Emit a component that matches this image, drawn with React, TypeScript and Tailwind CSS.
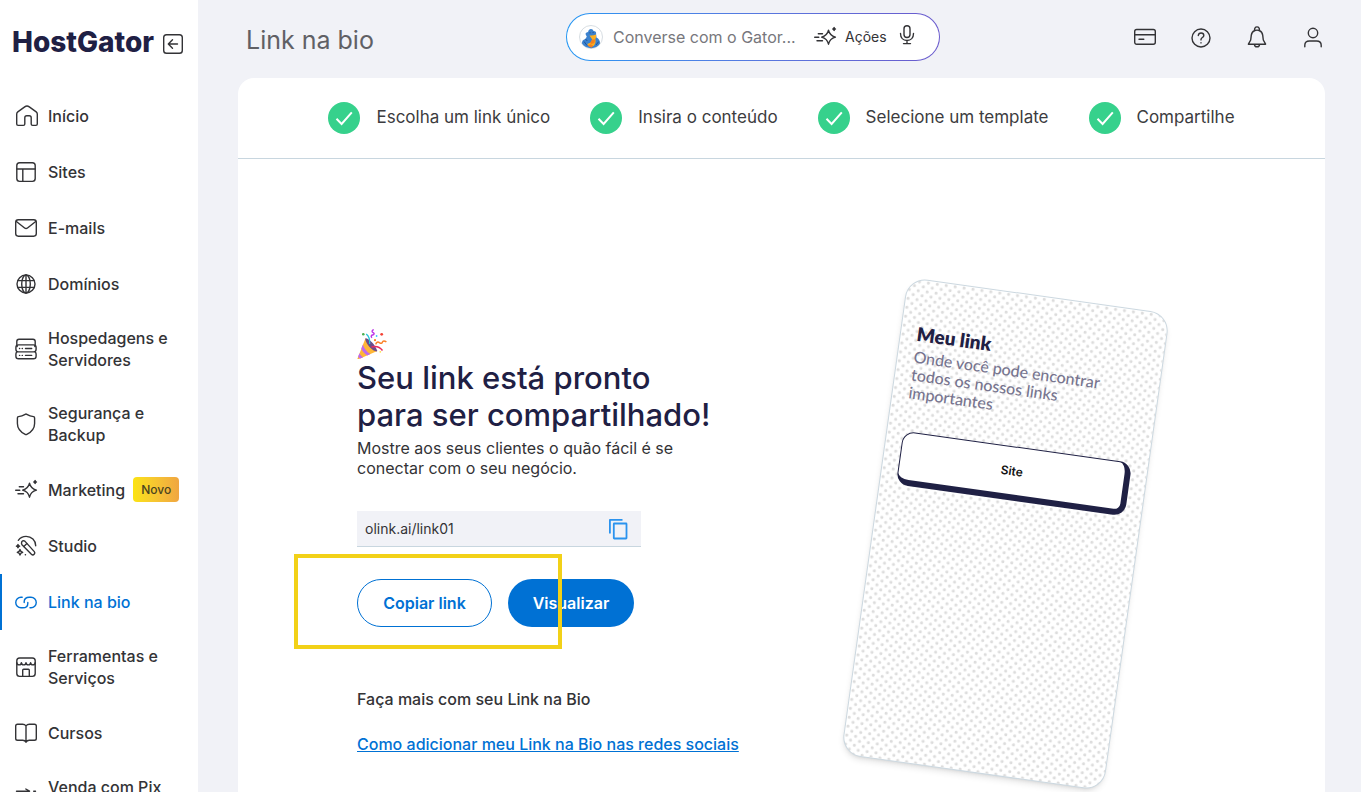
import React from "react";
import { clsx } from "clsx";

type IconProps = { className?: string };

const Svg: React.FC<IconProps & { children: React.ReactNode }> = ({
  className = "size-6",
  children,
}) => (
  <svg
    viewBox="0 0 24 24"
    fill="none"
    stroke="currentColor"
    strokeWidth="1.4"
    strokeLinecap="round"
    strokeLinejoin="round"
    className={clsx("shrink-0", className)}
    aria-hidden="true"
  >
    {children}
  </svg>
);

const HomeIcon = () => (
  <Svg>
    <path d="M2.7 10c0-.9.4-1.6 1.1-2.1l6.9-5c1.4-1 3.2-1 4.6 0l6.9 5c.7.5 1.1 1.200 1.100 2.100v10c0 .9-.6 1.400-1.400 1.400h-3.300c-.8 0-1.400-.5-1.400-1.400v-6.300c0-1.300-.7-2-2-2h-2.400c-1.300 0-2 .7-2 2V20c0 .9-.6 1.400-1.400 1.400H4.100c-.8 0-1.400-.5-1.400-1.400z" />
  </Svg>
);

const LayoutIcon = () => (
  <Svg>
    <rect x="2.8" y="2.8" width="18.4" height="18.6" rx="2.8" />
    <path d="M2.8 9h18.4M8.8 9v12.4" />
  </Svg>
);

const MailIcon = () => (
  <Svg>
    <rect x="1.7" y="3.8" width="20.6" height="16.4" rx="2.6" />
    <path d="m2.4 5.5 8.2 6.5c.9.7 2 .7 2.9 0l8.200-6.500" />
  </Svg>
);

const GlobeIcon = () => (
  <Svg>
    <circle cx="12" cy="12" r="9" />
    <ellipse cx="12" cy="12" rx="4.3" ry="9" />
    <path d="M12 3v18M4 8.6h16M4 15.4h16" />
  </Svg>
);

const ServerIcon = () => (
  <Svg>
    <path d="M3.2 9.5 2.8 7.4V4.5c0-1.3.9-2.2 2.2-2.2h14c1.3 0 2.2.9 2.2 2.2v2.9l-.4 2.1" />
    <rect x="1.9" y="7.9" width="20.2" height="7" rx="2.6" />
    <path d="M3 14.900c-.8.6-1.100 1.300-1.100 2.100v2.200c0 1.500 1.100 2.600 2.600 2.600h15c1.500 0 2.600-1.100 2.600-2.600V17c0-.8-.3-1.500-1.100-2.100" />
    <path d="M11.5 11.5h6.2M11.5 18.4h6.2M5.5 11.5h.2M8.2 11.5h.2M5.5 18.4h.2M8.2 18.4h.2" />
  </Svg>
);

const ShieldIcon = () => (
  <Svg>
    <path d="M11.2 2.3c.5-.3 1.1-.3 1.6 0 2.1 1.2 4.4 2 6.7 2.3.7.1 1.1.6 1.1 1.3v5.5c0 4.7-3.3 8.6-7.8 11-.5.3-1.1.3-1.6 0-4.5-2.4-7.8-6.3-7.8-11V5.9c0-.7.4-1.2 1.1-1.3 2.3-.3 4.6-1.1 6.7-2.3z" />
  </Svg>
);

const SparkIcon: React.FC<IconProps> = ({ className }) => (
  <Svg className={className}>
    <path d="M15.5 5.2c.8 3.7 2.9 5.9 6.9 7-4 1.1-6.1 3.3-6.9 7-.8-3.7-2.9-5.9-6.9-7 4-1.1 6.1-3.3 6.9-7z" />
    <path d="M5.3 8.8h4.2M1.7 12.2h4.1M4 15.7h5.5" />
    <path d="m21.1 2.6.5.9.9.5-.9.5-.5.9-.5-.9-.9-.5.9-.5z" fill="currentColor" />
  </Svg>
);

const WandIcon = () => (
  <Svg>
    <path d="M4.3 6.3C6.2 3.8 9 2.4 12.1 2.4c5.4 0 9.6 4.1 9.6 9.4" />
    <path d="M7.6 8.8a2 2 0 0 1 3.2-1.7l9.5 10.5c1.5 1.8-.9 4.5-2.9 2.7L8 10.7a2 2 0 0 1-.4-1.9z" />
    <path d="M12.9 9.6 9.8 12.4" />
    <path d="m4 10.6.5 1.1 1.1.5-1.1.5-.5 1.1-.5-1.1-1.1-.5 1.1-.5z" fill="currentColor" />
    <path d="m6 15.6.9 1.8 1.8.9-1.8.9L6 21l-.9-1.8-1.8-.9 1.8-.9zM11.3 20.8h.2" />
  </Svg>
);

const ChainIcon = () => (
  <Svg>
    <path d="M8.2 7.2H7A5.2 5.2 0 0 0 7 17.7h1.8c3 0 5-1.700 5-4.300v-1" />
    <path d="M16 17.7h1A5.2 5.2 0 0 0 17 7.200h-1.800c-3 0-5 1.700-5 4.300v1" />
  </Svg>
);

const StoreIcon = () => (
  <Svg>
    <rect x="2.8" y="3" width="18.4" height="18.4" rx="2.8" />
    <path d="M2.8 7.6c.3 3 4.4 3 4.6 0 .3 3 4.4 3 4.6 0 .3 3 4.4 3 4.6 0 .3 3 4.4 3 4.6 0M8.7 21.4v-6.2c0-.6.3-.9.9-.9h4.8c.6 0 .9.3.9.9v6.2" />
  </Svg>
);

const BookIcon = () => (
  <Svg>
    <path d="M12 5c-.8-1.3-2-1.8-3.4-1.8H3.5c-1.1 0-1.8.7-1.8 1.8v12.5c0 1.1.7 1.8 1.8 1.8h5.3c1.5 0 2.6.7 3.2 2 .6-1.3 1.7-2 3.2-2h5.3c1.1 0 1.8-.7 1.8-1.8V5c0-1.1-.7-1.8-1.8-1.8h-5.1C14 3.2 12.8 3.7 12 5zM12 5v16.3" />
  </Svg>
);

const PixIcon = () => (
  <Svg>
    <path d="M2.5 5.2h13M11.8 3l3.7 2.2-3.7 3M21.5 5.2h-1.8M21.5 13h-17M8.5 10l-4 3 4 3" />
  </Svg>
);

const CollapseIcon = () => (
  <Svg>
    <rect x="2.7" y="2.7" width="18.6" height="18.6" rx="2.8" />
    <path d="M16.500 12H7.500M11.500 7.800 7.300 12l4.200 4.200" />
  </Svg>
);

const MicIcon = () => (
  <Svg>
    <rect x="9" y="2.7" width="6" height="11.8" rx="3" />
    <path d="M5.5 10.5c0 4.2 2.6 7 6.5 7s6.5-2.800 6.500-7M12 17.500v3M8.500 20.600h7" />
  </Svg>
);

const CardIcon = () => (
  <Svg>
    <rect x="1.7" y="4.5" width="20.6" height="14.8" rx="2" />
    <path d="M1.7 9.7h20.6M6 14.2h4.8" />
  </Svg>
);

const HelpIcon = () => (
  <Svg>
    <circle cx="12" cy="13" r="9" />
    <path d="M9.3 10.5c.2-1.7 1.2-2.5 2.8-2.5s2.7.9 2.7 2.4c0 2.2-2.8 2-2.8 4.100v.4M12 17.700v.2" />
  </Svg>
);

const BellIcon = () => (
  <Svg>
    <path d="M9.8 5.5c-.8-1.7.4-3.6 2.2-3.6s3 1.9 2.2 3.6c2 .8 3.2 2.5 3.5 4.7l.6 4.8 2.3 4.2H3.4L5.7 15l.6-4.8c.3-2.2 1.5-3.900 3.500-4.700zM9.800 5.500c1.400-.5 3-.5 4.400 0M9.500 19.400c0 3.200 5 3.200 5 0" />
  </Svg>
);

const UserIcon = () => (
  <Svg>
    <circle cx="12" cy="8" r="4.7" />
    <path d="M3.8 21.8v-1.5c0-2.9 1.7-4.3 4.6-4.3h7.200c2.900 0 4.600 1.400 4.600 4.300v1.500" />
  </Svg>
);

const CopyIcon = () => (
  <svg viewBox="0 0 24 24" fill="none" stroke="currentColor" strokeWidth="1.8" strokeLinejoin="round" className="size-6">
    <path d="M2.9 16.5V2.9h12.6" />
    <rect x="6.8" y="6.5" width="12.7" height="15" rx=".5" />
  </svg>
);

const GatorAvatar = () => (
  <svg viewBox="0 0 24 24" className="size-6 shrink-0" aria-hidden="true">
    <circle cx="12" cy="12" r="11.5" fill="#fff" stroke="#c5ced6" strokeWidth=".7" />
    <path d="M3 18.600c-.2-2.400 1-3.800 3.200-4.500l1.600-2.300-1.200-2.500c-.2-1.600 1.200-2 2.500-2.300.2-1.600 1.200-3 2.900-3 1.400 0 2 .9 2.600 2 1.900.1 2.900 1.200 2.500 2.900l.4 3.600c2.400 1.200 3.700 3.500 3.500 6.100-2 3.200-5 4.600-8.800 4.600-3.900 0-7.200-1.700-9.200-4.600z" fill="#3b82cf" />
    <path d="M10.500 10.400c2.300.3 4.500-.1 6.500-.9.3 1.800.2 3.300-.7 4.500.7 2.500.2 5-1.600 6.900l-4.600.5-1.900-2.400 3.700-1.600 1.300-3z" fill="#fdb022" />
    <path d="m13.200 14.400 2.900-.2-.6 3.800-3 1.100-1.600-1zM8.400 20.200l3.300-1 2.700 1.500-2 2.100z" fill="#f58220" />
    <path d="M10.600 7.800h.8M13.7 7.600h.8" stroke="#173f7c" strokeWidth="1" />
    <path d="m5 16.500 3 4M17 20l2.700-3.400M6.500 14l1.800 2" stroke="#1c4f96" strokeWidth=".9" />
  </svg>
);

const PartyIcon = () => (
  <svg viewBox="0 0 30 30" className="size-[30px]" fill="none" aria-hidden="true">
    <path d="M.6 29.300 8.500 9.200 20.300 21.900 2.600 29.800c-1.400.5-2.600.2-2-.5z" fill="#ffb636" />
    <path d="M5.9 15.600c.9 3.500 3.700 7.600 7.500 9.500l-3.100 1.400C7.500 25 5.200 22 4.300 19.600zM2.500 24.200c.8 1.700 2 3.100 3.700 4.100l-3 1.200c-1-.5-1.800-1.300-2.100-2.100z" fill="#bd6af0" />
    <path d="M8.500 9.200c3.700.3 9.600 6 11.800 12.700-.5 1.200-3.900.2-7-3.100-3.400-3.500-5.500-8.100-4.800-9.600z" fill="#6b4c8a" />
    <path d="M9.200 5c3.100 2.300 3.800 5.600 3.400 10" stroke="#26c6da" strokeWidth="1.3" />
    <path d="M16.700.5c-2 .8-2.100 2.500-.5 3.200 1.600.7.900 2-.7 2.300-1.600.3-1.700 1.600-.5 2.800" stroke="#bd35e8" strokeWidth="1.4" />
    <path d="M18.800 15.400c.4-2.400 2.200-2.900 3.600-1.800 1.600 1.200 2.700.8 3-.5.4-1.500 2.300-1.300 4-.2" stroke="#fa8128" strokeWidth="1.5" />
    <path d="M14.500 18c3.800-1.200 8.200-.2 11 3.500" stroke="#e92c5c" strokeWidth="1.5" />
    <circle cx="6.3" cy="5.3" r="1.3" fill="#4caf50" />
    <circle cx="24.7" cy="5.3" r="1.4" fill="#f44336" />
    <circle cx="18" cy="11.2" r="1.1" fill="#fa8128" />
    <circle cx="19.6" cy="7" r=".9" fill="#40c4ff" />
    <circle cx="23.3" cy="22.8" r=".9" fill="#ffe14d" />
  </svg>
);

const CheckBadge = () => (
  <svg viewBox="0 0 32 32" className="size-8 shrink-0" fill="none" aria-hidden="true">
    <circle cx="16" cy="16" r="16" fill="#36d18c" />
    <path d="m8.500 16.800 5.100 5.200L23.800 10.400" stroke="#fff" strokeWidth="2" />
  </svg>
);

const navItems = [
  { label: "Início", icon: HomeIcon },
  { label: "Sites", icon: LayoutIcon },
  { label: "E-mails", icon: MailIcon },
  { label: "Domínios", icon: GlobeIcon },
  { label: "Hospedagens e Servidores", icon: ServerIcon },
  { label: "Segurança e Backup", icon: ShieldIcon },
  { label: "Marketing", icon: SparkIcon, badge: "Novo" },
  { label: "Studio", icon: WandIcon },
  { label: "Link na bio", icon: ChainIcon, active: true },
  { label: "Ferramentas e Serviços", icon: StoreIcon },
  { label: "Cursos", icon: BookIcon },
  { label: "Venda com Pix Parcelado", icon: PixIcon },
];

const steps = [
  "Escolha um link único",
  "Insira o conteúdo",
  "Selecione um template",
  "Compartilhe",
];

const headerActions = [
  { label: "Pagamentos", icon: CardIcon },
  { label: "Ajuda", icon: HelpIcon },
  { label: "Notificações", icon: BellIcon },
  { label: "Minha conta", icon: UserIcon },
];

const Sidebar = () => (
  <aside className="w-[198px] shrink-0 bg-white">
    <div className="flex h-[88px] items-center justify-between pl-3 pr-[13px]">
      <span className="pb-1 text-[28px] leading-8 font-extrabold text-[#1f2044]">HostGator</span>
      <button type="button" aria-label="Recolher menu">
        <CollapseIcon />
      </button>
    </div>
    <nav>
      {navItems.map(({ label, icon: Icon, badge, active }) => (
        <a
          key={label}
          href="#"
          className={clsx(
            "flex min-h-14 items-center border-l-2 pb-4 pl-3 pr-4 pt-[15px] text-base leading-[22px] font-medium",
            active ? "border-[#0071d4] text-[#0071d4]" : "border-transparent"
          )}
        >
          <Icon />
          <span className="ml-[10px]">{label}</span>
          {badge && (
            <span className="ml-2 rounded bg-linear-to-r from-[#fbe30f] to-[#f0a640] px-2 text-xs leading-[25px] text-[#4a4420]">
              {badge}
            </span>
          )}
        </a>
      ))}
    </nav>
  </aside>
);

const Header = () => (
  <header className="flex h-[78px] items-start pl-12 pr-9">
    <h1 className="w-80 shrink-0 pt-6 text-[25px] leading-8 text-[#606065]">
      Link na bio
    </h1>
    <div className="mt-[13px] w-[374px] rounded-full bg-linear-to-r from-[#2196f3] to-[#6a5acd] p-px">
      <form className="flex h-[46px] items-center rounded-full bg-white pl-3 pr-5">
        <GatorAvatar />
        <input
          aria-label="Converse com o Gator"
          placeholder="Converse com o Gator..."
          className="ml-[10px] w-[200px] text-base text-[#333] outline-none placeholder:text-[#77777c]"
        />
        <button type="button" className="flex items-center gap-2 text-sm">
          <SparkIcon />
          Ações
        </button>
        <button type="button" aria-label="Falar" className="ml-2 pb-1">
          <MicIcon />
        </button>
      </form>
    </div>
    <div className="ml-auto flex gap-8 pt-[25px]">
      {headerActions.map(({ label, icon: Icon }) => (
        <button key={label} type="button" aria-label={label}>
          <Icon />
        </button>
      ))}
    </div>
  </header>
);

const Stepper = () => (
  <ol className="flex h-[81px] items-center justify-center gap-10 border-b border-[#c8d6df]">
    {steps.map((step) => (
      <li key={step} className="flex items-center gap-4 text-[17px] text-[#3c3c40]">
        <CheckBadge />
        {step}
      </li>
    ))}
  </ol>
);

const ShareInfo = () => (
  <section className="pt-9">
    <PartyIcon />
    <h2 className="text-[31px] leading-[37px] font-medium text-[#1f2044]">
      Seu link está pronto
      <br />
      para ser compartilhado!
    </h2>
    <p className="mt-[5px] text-base leading-5">
      Mostre aos seus clientes o quão fácil é se
      <br />
      conectar com o seu negócio.
    </p>
    <div className="mt-[33px] flex h-9 w-[284px] items-center border-b border-[#c8d6df] bg-[#f1f2f7] pl-2 pr-[10px]">
      <input
        aria-label="Seu link"
        readOnly
        value="olink.ai/link01"
        className="min-w-0 flex-1 text-sm outline-none"
      />
      <button type="button" aria-label="Copiar" className="text-[#2b93ee]">
        <CopyIcon />
      </button>
    </div>
    <div className="relative mt-8 flex gap-4">
      <button
        type="button"
        className="h-12 w-[135px] rounded-full border border-[#0071d4] text-base font-semibold text-[#0071d4]"
      >
        Copiar link
      </button>
      <button
        type="button"
        className="h-12 w-[126px] rounded-full bg-[#0071d4] text-base font-semibold text-white"
      >
        Visualizar
      </button>
      <div className="pointer-events-none absolute -left-[63px] -top-[25px] h-[95px] w-[268px] border-4 border-[#f2d118]" />
    </div>
    <p className="mt-[60px] text-base font-medium">Faça mais com seu Link na Bio</p>
    <a href="#" className="mt-[21px] inline-block text-base font-medium text-[#0071d4] underline">
      Como adicionar meu Link na Bio nas redes sociais
    </a>
  </section>
);

const PhonePreview = () => (
  <div className="h-[482px] w-[265px] shrink-0 rotate-8 rounded-[20px] border border-[#ccd8e0] bg-white bg-[radial-gradient(circle_at_25%_25%,#dcdcdc_1px,transparent_2px),radial-gradient(circle_at_75%_75%,#dcdcdc_1px,transparent_2px)] bg-size-[9px_9px] px-4 pt-[42px] shadow-md">
    <h3 className="font-[Lato,sans-serif] text-[19px] leading-6 font-extrabold text-[#1f2044]">Meu link</h3>
    <p className="mt-[2px] pr-8 font-[Lato,sans-serif] text-base leading-[18px] font-medium text-[#77758f]">
      Onde você pode encontrar todos os nossos links importantes
    </p>
    <button
      type="button"
      className="mt-[30px] h-[54px] w-full rounded-xl border border-r-[6px] border-b-[6px] border-[#1f2044] bg-white text-xs font-semibold text-[#111]"
    >
      Site
    </button>
  </div>
);

export default function App() {
  return (
    <div className="flex h-screen overflow-hidden bg-[#f1f2f7] font-[Inter,'Liberation_Sans',sans-serif] text-[#333336]">
      <Sidebar />
      <div className="flex min-w-0 flex-1 flex-col">
        <Header />
        <main className="ml-10 mr-9 flex-1 overflow-hidden rounded-t-2xl bg-white">
          <Stepper />
          <div className="flex items-start justify-between pl-[119px] pr-[187px] pt-[134px]">
            <ShareInfo />
            <PhonePreview />
          </div>
        </main>
      </div>
    </div>
  );
}
